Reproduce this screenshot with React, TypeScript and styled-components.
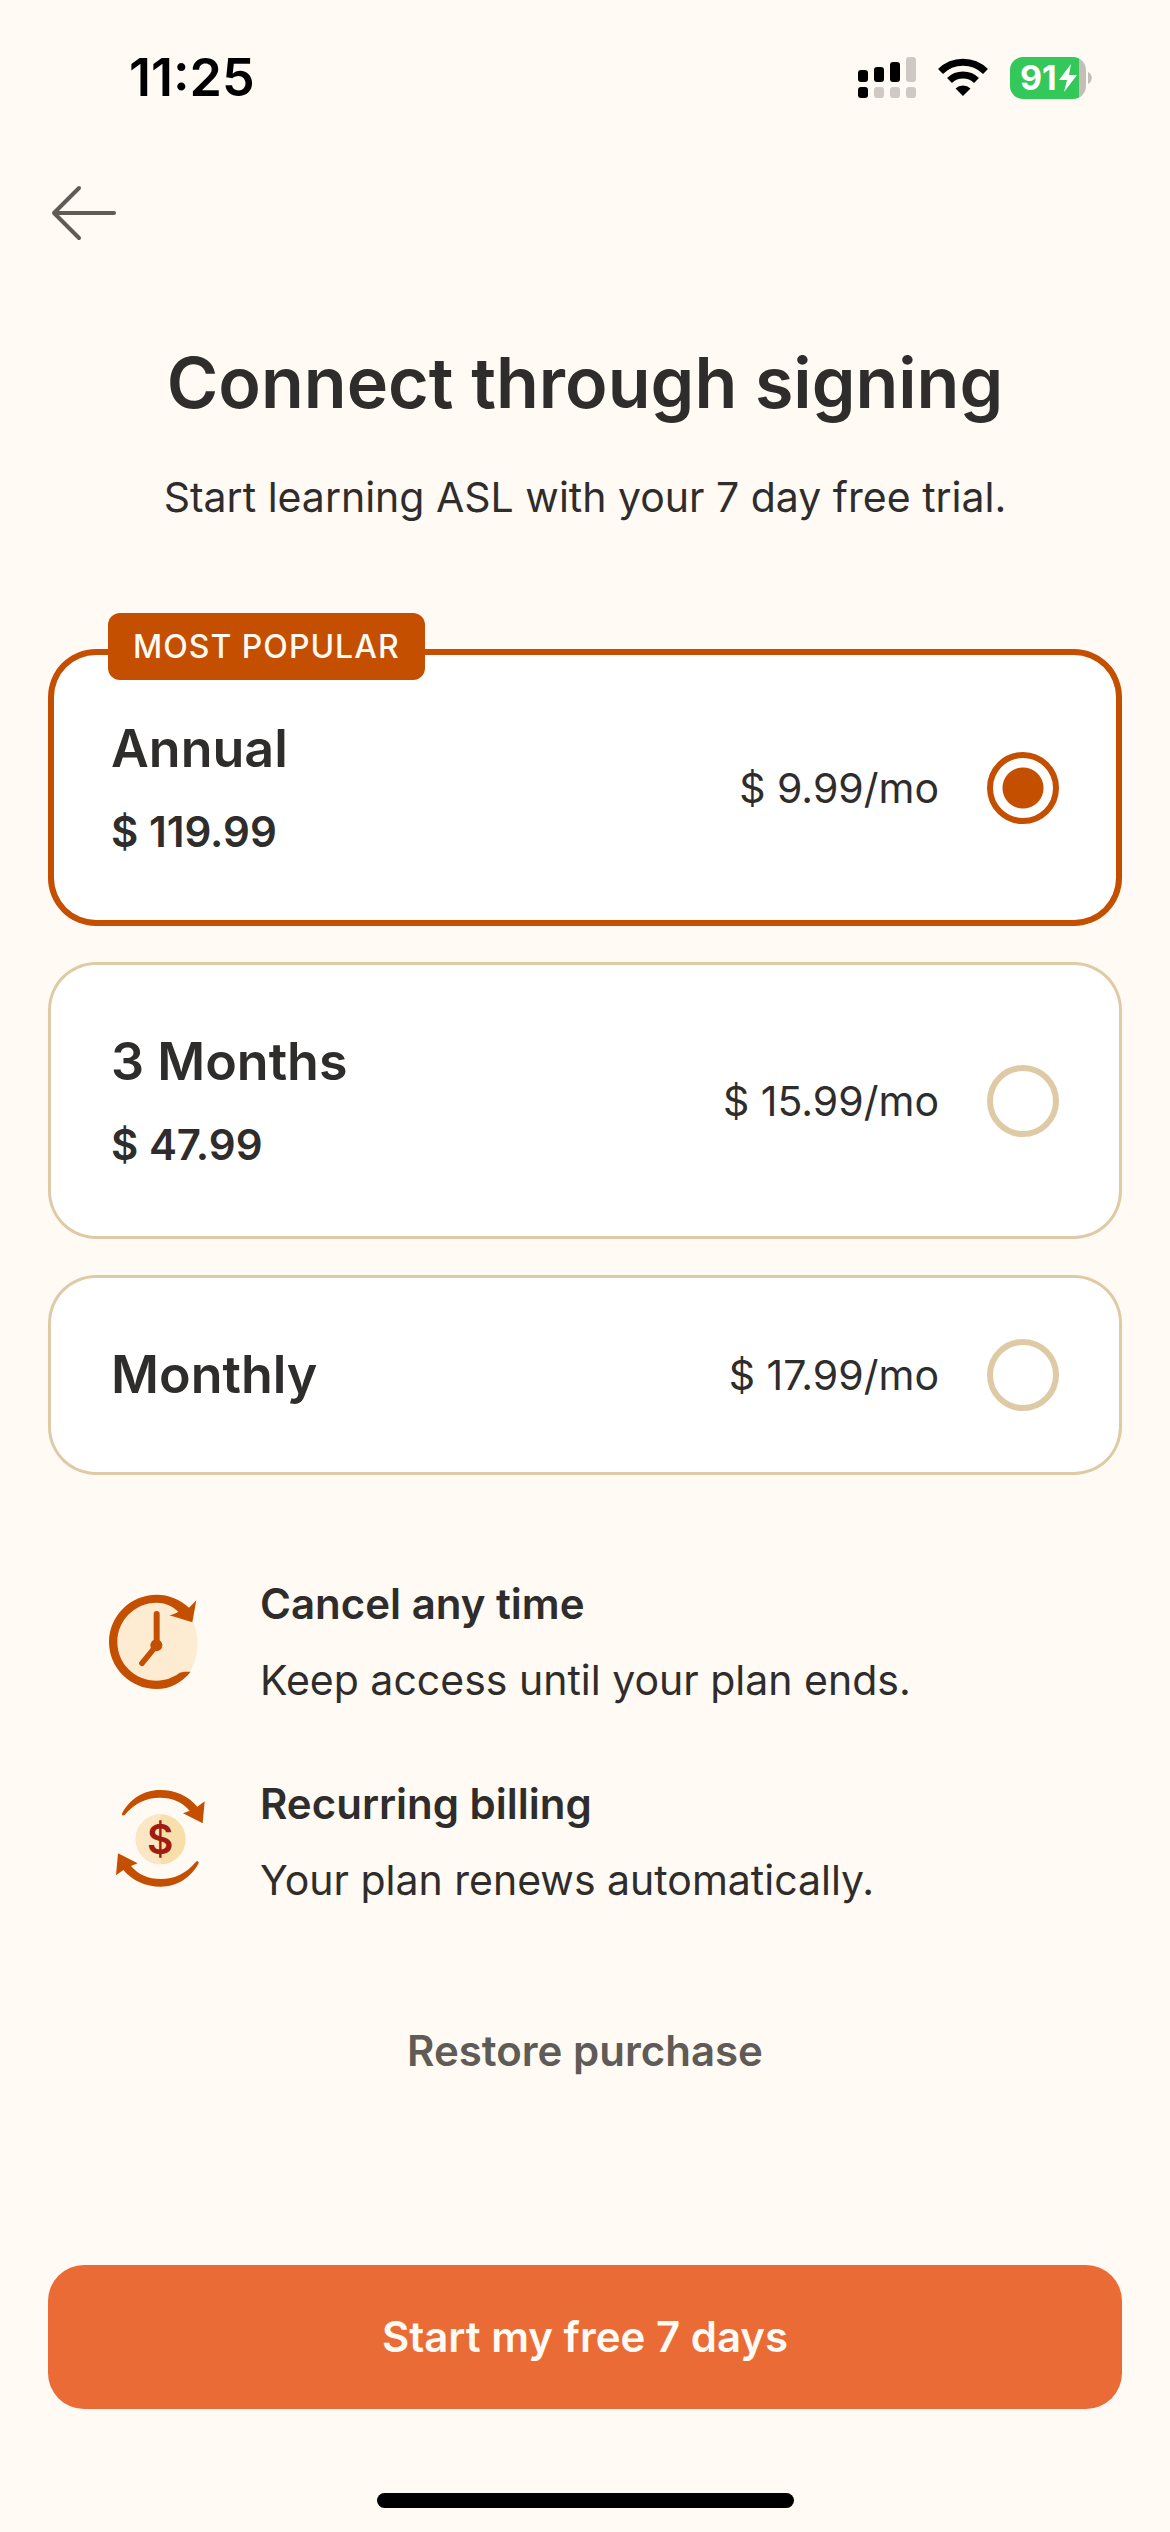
import { useState } from "react";
import styled, { createGlobalStyle } from "styled-components";

const color = {
  page: "#fffaf3",
  ink: "#2f2d2c",
  muted: "#5f5b57",
  accent: "#c44f00",
  action: "#ea6b36",
  line: "#dfcaa6",
  card: "#ffffff",
  face: "#fdebd2",
};

const GlobalStyle = createGlobalStyle`
  *, *::before, *::after { box-sizing: border-box; }
  body {
    margin: 0;
    background: ${color.page};
    color: ${color.ink};
    font-family: Inter, "Liberation Sans", sans-serif;
  }
  h1, h2, p { margin: 0; }
`;

const Screen = styled.div`
  min-height: 100vh;
  display: flex;
  flex-direction: column;
  background: ${color.page};
`;

const StatusBar = styled.header`
  height: 156px;
  padding: 0 78px 0 129px;
  display: flex;
  align-items: center;
  justify-content: space-between;
  color: #000;
`;

const Clock = styled.time`
  font-size: 52px;
  line-height: 60px;
  font-weight: 600;
`;

const StatusIcons = styled.div`
  display: flex;
  align-items: center;
  gap: 22px;
`;

const Battery = styled.div`
  display: flex;
  align-items: center;
  gap: 2px;
`;

const BatteryBody = styled.div`
  width: 76px;
  height: 42px;
  padding-left: 10px;
  display: flex;
  align-items: center;
  gap: 2px;
  border-radius: 13px;
  background: linear-gradient(to right, #34c759 69px, #c5bdb8 69px);
  color: #fff;
  font-size: 34px;
  line-height: 42px;
  font-weight: 700;
`;

const Nav = styled.nav`
  padding: 24px 48px;
  display: flex;
`;

const BackButton = styled.button`
  padding: 0;
  border: 0;
  background: none;
  display: flex;
  color: ${color.muted};
  cursor: pointer;
`;

const Main = styled.main`
  flex: 1;
  padding: 71px 48px 0;
  display: flex;
  flex-direction: column;
`;

const Intro = styled.div`
  display: flex;
  flex-direction: column;
  gap: 45px;
  text-align: center;
`;

const Title = styled.h1`
  font-size: 70px;
  line-height: 84px;
  font-weight: 600;
`;

const Body = styled.p`
  font-size: 41px;
  line-height: 54px;
`;

const Plans = styled.div`
  margin-top: 125px;
  display: flex;
  flex-direction: column;
  gap: 36px;
`;

const PlanCard = styled.label<{ $selected: boolean }>`
  position: relative;
  padding: 64px 63px;
  display: flex;
  align-items: center;
  gap: 48px;
  border-radius: 48px;
  background: ${color.card};
  box-shadow: inset 0 0 0
    ${({ $selected }) => ($selected ? `6px ${color.accent}` : `3px ${color.line}`)};
  cursor: pointer;
`;

const Badge = styled.span`
  position: absolute;
  top: -36px;
  left: 60px;
  padding: 0 25px;
  border-radius: 12px;
  background: ${color.accent};
  color: ${color.page};
  font-size: 32px;
  line-height: 67px;
  font-weight: 500;
  letter-spacing: 1px;
`;

const PlanText = styled.span`
  flex: 1;
  padding: 3px 0;
  display: flex;
  flex-direction: column;
  gap: 23px;
`;

const PlanName = styled.span`
  font-size: 52px;
  line-height: 66px;
  font-weight: 600;
`;

const PlanTotal = styled.span`
  font-size: 42px;
  line-height: 54px;
  font-weight: 600;
`;

const PlanRate = styled.span`
  font-size: 41px;
  line-height: 54px;
`;

const Radio = styled.input`
  appearance: none;
  flex: none;
  width: 72px;
  height: 72px;
  margin: 0;
  border: 6px solid ${color.line};
  border-radius: 50%;
  background: ${color.card};

  &:checked {
    border-color: ${color.accent};
    background: radial-gradient(circle, ${color.accent} 20px, ${color.card} 21px);
  }
`;

const Features = styled.div`
  margin-top: 102px;
  padding: 0 54px;
  display: flex;
  flex-direction: column;
  gap: 70px;
`;

const Feature = styled.section`
  display: flex;
  align-items: center;
  gap: 50px;
`;

const FeatureText = styled.div`
  display: flex;
  flex-direction: column;
  gap: 22px;
`;

const FeatureTitle = styled.h2`
  font-size: 42px;
  line-height: 54px;
  font-weight: 600;
`;

const RestoreButton = styled.button`
  align-self: center;
  margin-top: 117px;
  padding: 0;
  border: 0;
  background: none;
  color: ${color.muted};
  font: 600 42px/54px Inter, "Liberation Sans", sans-serif;
  cursor: pointer;
`;

const Footer = styled.footer`
  padding: 0 48px 24px;
  display: flex;
  flex-direction: column;
  align-items: center;
  gap: 84px;
`;

const StartButton = styled.button`
  width: 100%;
  padding: 45px 36px;
  border: 0;
  border-radius: 36px;
  background: ${color.action};
  color: ${color.page};
  font: 600 42px/54px Inter, "Liberation Sans", sans-serif;
  cursor: pointer;
`;

const HomeIndicator = styled.div`
  width: 417px;
  height: 15px;
  border-radius: 8px;
  background: #000;
`;

const SignalIcon = () => (
  <svg width="58" height="42" viewBox="0 0 58 42" aria-hidden="true">
    <g fill="#000">
      <rect x="0" y="13" width="10" height="12" rx="3" />
      <rect x="16" y="10" width="10" height="15" rx="3" />
      <rect x="32" y="5" width="10" height="20" rx="3" />
      <rect x="0" y="30" width="10" height="11" rx="3" />
    </g>
    <g fill="#d0c8c4">
      <rect x="48" y="0" width="10" height="25" rx="3" />
      <rect x="16" y="30" width="10" height="11" rx="3" />
      <rect x="32" y="30" width="10" height="11" rx="3" />
      <rect x="48" y="30" width="10" height="11" rx="3" />
    </g>
  </svg>
);

const WifiIcon = () => (
  <svg width="50" height="42" viewBox="0 0 50 42" aria-hidden="true">
    <g fill="none" stroke="#000" strokeWidth="7">
      <path d="M2.5 14.5a32 32 0 0 1 45 0" />
      <path d="M11.5 23.5a19.500 19.500 0 0 1 27 0" />
    </g>
    <path d="M25 39l-7.500-7.500a11 11 0 0 1 15 0z" />
  </svg>
);

const BoltIcon = () => (
  <svg width="18" height="30" viewBox="0 0 18 30" aria-hidden="true">
    <path d="M12 1L0 17h8L5 29 18 12h-8z" fill="#fff" />
  </svg>
);

const BatteryTip = () => (
  <svg width="4" height="12" viewBox="0 0 4 12" aria-hidden="true">
    <path d="M0 0c5 2 5 10 0 12z" fill="#c5bdb8" />
  </svg>
);

const ArrowLeftIcon = () => (
  <svg width="72" height="66" viewBox="0 0 72 66" aria-hidden="true">
    <path
      d="M66 33H6M31 8L6 33l25 25"
      fill="none"
      stroke="currentColor"
      strokeWidth="4"
      strokeLinecap="round"
      strokeLinejoin="round"
    />
  </svg>
);

const CancelIcon = () => (
  <svg width="108" height="108" viewBox="36 54 324 324" aria-hidden="true">
    <path
      d="M206 92C275 92 322 150 322 215c0 40-8 65-24 91L206 340C140 340 80 280 80 216s60-124 126-124z"
      fill={color.face}
    />
    <path
      d="M302 305C276 338 240 357 200 357 121 357 57 294 57 216S121 74 200 74c37 0 70 14 97 39L319 91 307 157 238 136c10-2 18-5 27-11C246 107 224 98 200 98 135 98 82 150 82 216s53 116 118 116c26 0 48-8 67-22 7-5 14-5 35-5z"
      fill={color.accent}
    />
    <g stroke={color.accent} strokeLinecap="round">
      <path d="M200 132V226" strokeWidth="18" />
      <path d="M200 226L156 280" strokeWidth="17" />
    </g>
    <circle cx="199" cy="226" r="18" fill={color.accent} />
  </svg>
);

const arrowPath =
  "M96 131C118 88 160 60 210 60c46 0 85 18 112 50L344 94 338 160 279 130 299 122C277 96 246 83 210 83c-42 0-77 17-106 52-4 3-9 1-8-4z";

const BillingIcon = () => (
  <svg width="108" height="108" viewBox="36 54 324 324" aria-hidden="true">
    <circle cx="212" cy="208" r="75" fill="#f8dfa9" />
    <path d="M212 133a75 75 0 0 0 0 150z" fill="#fbe7c6" />
    <g fill={color.accent}>
      <path d={arrowPath} />
      <path d={arrowPath} transform="rotate(180 211 205)" />
    </g>
    <text
      x="211"
      y="252"
      textAnchor="middle"
      fontFamily="Inter, sans-serif"
      fontSize="122"
      fontWeight="600"
      fill="#a01c10"
    >
      $
    </text>
  </svg>
);

const plans = [
  { id: "annual", name: "Annual", total: "$ 119.99", rate: "$ 9.99/mo", badge: "MOST POPULAR" },
  { id: "quarter", name: "3 Months", total: "$ 47.99", rate: "$ 15.99/mo" },
  { id: "monthly", name: "Monthly", rate: "$ 17.99/mo" },
];

const features = [
  { title: "Cancel any time", text: "Keep access until your plan ends.", Icon: CancelIcon },
  { title: "Recurring billing", text: "Your plan renews automatically.", Icon: BillingIcon },
];

export default function App() {
  const [selected, setSelected] = useState("annual");

  return (
    <Screen>
      <GlobalStyle />
      <StatusBar>
        <Clock>11:25</Clock>
        <StatusIcons>
          <SignalIcon />
          <WifiIcon />
          <Battery>
            <BatteryBody>
              91
              <BoltIcon />
            </BatteryBody>
            <BatteryTip />
          </Battery>
        </StatusIcons>
      </StatusBar>
      <Nav>
        <BackButton type="button" aria-label="Back">
          <ArrowLeftIcon />
        </BackButton>
      </Nav>
      <Main>
        <Intro>
          <Title>Connect through signing</Title>
          <Body>Start learning ASL with your 7 day free trial.</Body>
        </Intro>
        <Plans role="radiogroup" aria-label="Plan">
          {plans.map((plan) => (
            <PlanCard key={plan.id} $selected={plan.id === selected} htmlFor={plan.id}>
              {plan.badge && <Badge>{plan.badge}</Badge>}
              <PlanText>
                <PlanName>{plan.name}</PlanName>
                {plan.total && <PlanTotal>{plan.total}</PlanTotal>}
              </PlanText>
              <PlanRate>{plan.rate}</PlanRate>
              <Radio
                type="radio"
                name="plan"
                id={plan.id}
                checked={plan.id === selected}
                onChange={() => setSelected(plan.id)}
              />
            </PlanCard>
          ))}
        </Plans>
        <Features>
          {features.map(({ title, text, Icon }) => (
            <Feature key={title}>
              <Icon />
              <FeatureText>
                <FeatureTitle>{title}</FeatureTitle>
                <Body>{text}</Body>
              </FeatureText>
            </Feature>
          ))}
        </Features>
        <RestoreButton type="button">Restore purchase</RestoreButton>
      </Main>
      <Footer>
        <StartButton type="button">Start my free 7 days</StartButton>
        <HomeIndicator />
      </Footer>
    </Screen>
  );
}
